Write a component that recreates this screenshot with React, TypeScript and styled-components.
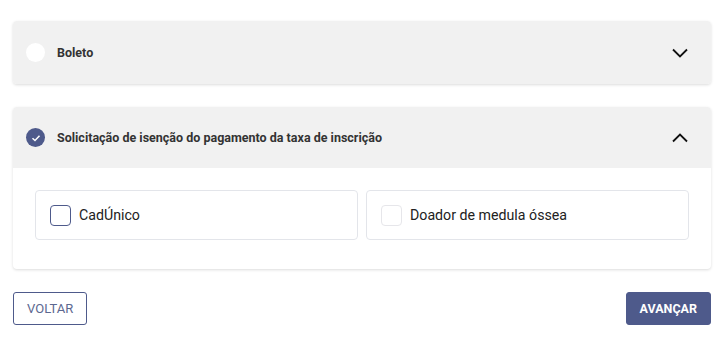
import styled, { createGlobalStyle } from 'styled-components'

const primary = '#4e5a8b'

const GlobalStyle = createGlobalStyle`
  body {
    margin: 0;
    background: #fff;
    font-family: Roboto, "Liberation Sans", sans-serif;
    color: #333;
  }
`

const Page = styled.div`
  padding: 21px 9px 0 13px;
  display: flex;
  flex-direction: column;
  gap: 23px;
`

const Card = styled.div`
  background: #fff;
  border-radius: 4px;
  box-shadow: 0 1px 3px rgba(0, 0, 0, 0.14);
  overflow: hidden;
`

const Header = styled.div<{ $height: number }>`
  height: ${p => p.$height}px;
  background: #f1f1f1;
  display: flex;
  align-items: center;
  padding: 0 22px 0 13px;
  gap: 12px;
`

const Radio = styled.span<{ $checked?: boolean }>`
  width: 19px;
  height: 19px;
  border-radius: 50%;
  background: ${p => (p.$checked ? primary : '#fff')};
  display: flex;
  align-items: center;
  justify-content: center;
  flex: none;
`

const Title = styled.span`
  flex: 1;
  font-size: 12.5px;
  font-weight: 700;
  color: #333;
`

const Body = styled.div`
  padding: 22px 22px 29px;
  display: grid;
  grid-template-columns: 1fr 1fr;
  gap: 8px;
`

const Option = styled.div`
  height: 50px;
  box-sizing: border-box;
  border: 1px solid #e3e5ea;
  border-radius: 4px;
  display: flex;
  align-items: center;
  padding-left: 14px;
  gap: 8px;
  font-size: 14.2px;
  color: #222;
`

const Box = styled.span<{ $active?: boolean }>`
  width: 21px;
  height: 21px;
  box-sizing: border-box;
  border-radius: 4px;
  border: ${p => (p.$active ? `1.5px solid ${primary}` : '1px solid #e6e6ea')};
  flex: none;
`

const Footer = styled.div`
  display: flex;
  justify-content: space-between;
`

const Button = styled.button<{ $filled?: boolean }>`
  height: 33px;
  padding: 0 ${p => (p.$filled ? 13 : 13)}px;
  border-radius: 3px;
  font-family: Roboto, "Liberation Sans", sans-serif;
  font-size: ${p => (p.$filled ? 12.5 : 13)}px;
  font-weight: ${p => (p.$filled ? 700 : 400)};
  border: 1px solid ${primary};
  background: ${p => (p.$filled ? primary : '#fff')};
  color: ${p => (p.$filled ? '#fff' : '#5c6890')};
`

const Chevron = ({ up }: { up?: boolean }) => (
  <svg width="18" height="18" viewBox="0 0 18 18" fill="none">
    <path
      d={up ? 'M2 12.5 L9 5.5 L16 12.5' : 'M2 5.5 L9 12.5 L16 5.5'}
      stroke="#111"
      strokeWidth="1.8"
    />
  </svg>
)

export default function App() {
  return (
    <>
      <GlobalStyle />
      <Page>
        <Card>
          <Header $height={63}>
            <Radio />
            <Title>Boleto</Title>
            <Chevron />
          </Header>
        </Card>
        <Card>
          <Header $height={61}>
            <Radio $checked>
              <svg width="10" height="10" viewBox="0 0 10 10" fill="none">
                <path d="M1.5 5.2 L4 7.5 L8.5 2.8" stroke="#fff" strokeWidth="1.5" />
              </svg>
            </Radio>
            <Title>Solicitação de isenção do pagamento da taxa de inscrição</Title>
            <Chevron up />
          </Header>
          <Body>
            <Option>
              <Box $active />
              CadÚnico
            </Option>
            <Option>
              <Box />
              Doador de medula óssea
            </Option>
          </Body>
        </Card>
        <Footer>
          <Button>VOLTAR</Button>
          <Button $filled>AVANÇAR</Button>
        </Footer>
      </Page>
    </>
  )
}
